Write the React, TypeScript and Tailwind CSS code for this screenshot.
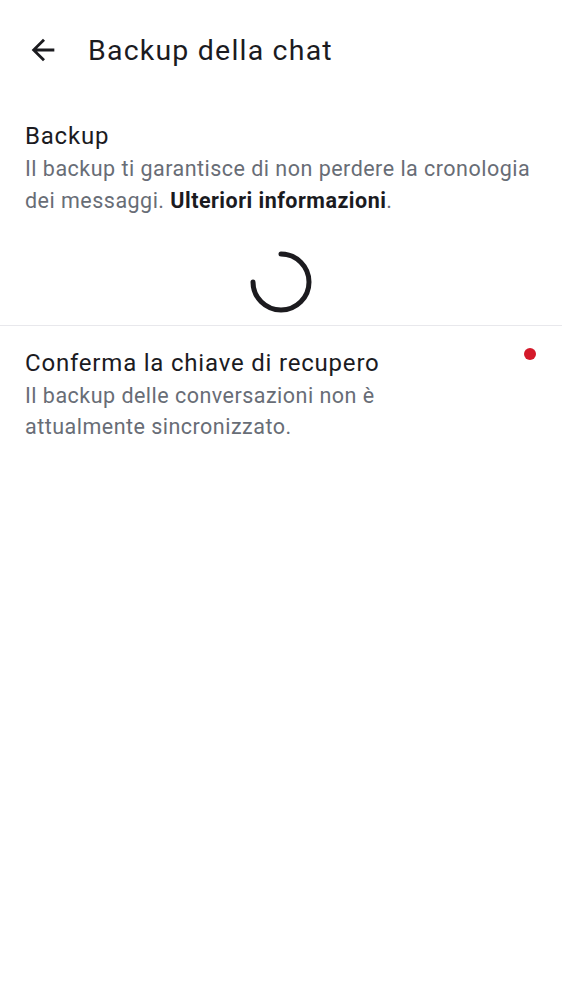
import React from "react";

function BackIcon() {
  return (
    <svg width="34" height="34" viewBox="0 0 24 24" fill="currentColor">
      <path d="M20 11H7.83l5.59-5.59L12 4l-8 8 8 8 1.41-1.41L7.83 13H20v-2z" />
    </svg>
  );
}

function Spinner() {
  // arc from 12 o'clock clockwise to 9 o'clock
  return (
    <svg width="66" height="66" viewBox="0 0 66 66">
      <path
        d="M33 5 A28 28 0 1 1 5 33"
        fill="none"
        stroke="#1c1b1f"
        strokeWidth="5"
        strokeLinecap="round"
      />
    </svg>
  );
}

export default function App() {
  return (
    <div className="w-[562px] h-[1000px] bg-white text-[#1b1b1f] font-['Roboto',sans-serif]">
      <header className="h-[100px] flex items-center pl-[26px]">
        <BackIcon />
        <h1 className="ml-[28px] text-[28.5px] tracking-[1.2px] leading-none pt-[2px]">Backup della chat</h1>
      </header>

      <section className="px-[25px] pt-[21px]">
        <h2 className="text-[24px] tracking-[0.8px] leading-[30px]">Backup</h2>
        <p className="mt-[2px] text-[21.5px] tracking-[0.48px] leading-[32px] text-[#686d76]">
          Il backup ti garantisce di non perdere la cronologia dei messaggi.{" "}
          <span className="font-bold text-[#1b1b1f]">Ulteriori informazioni</span>.
        </p>
      </section>

      <div className="flex justify-center pt-[32px] pb-[10px]">
        <Spinner />
      </div>

      <div className="h-px bg-[#e8e8ec]" />

      <section className="flex pl-[25px] pr-[26px] pt-[21px]">
        <div className="flex-1">
          <h2 className="text-[24px] tracking-[0.8px] leading-[32px]">Conferma la chiave di recupero</h2>
          <p className="mt-[1px] text-[21.5px] tracking-[0.48px] leading-[31px] text-[#686d76] w-[430px]">
            Il backup delle conversazioni non è attualmente sincronizzato.
          </p>
        </div>
        <span className="mt-[1px] w-[12px] h-[12px] rounded-full bg-[#d4192a]" />
      </section>
    </div>
  );
}
